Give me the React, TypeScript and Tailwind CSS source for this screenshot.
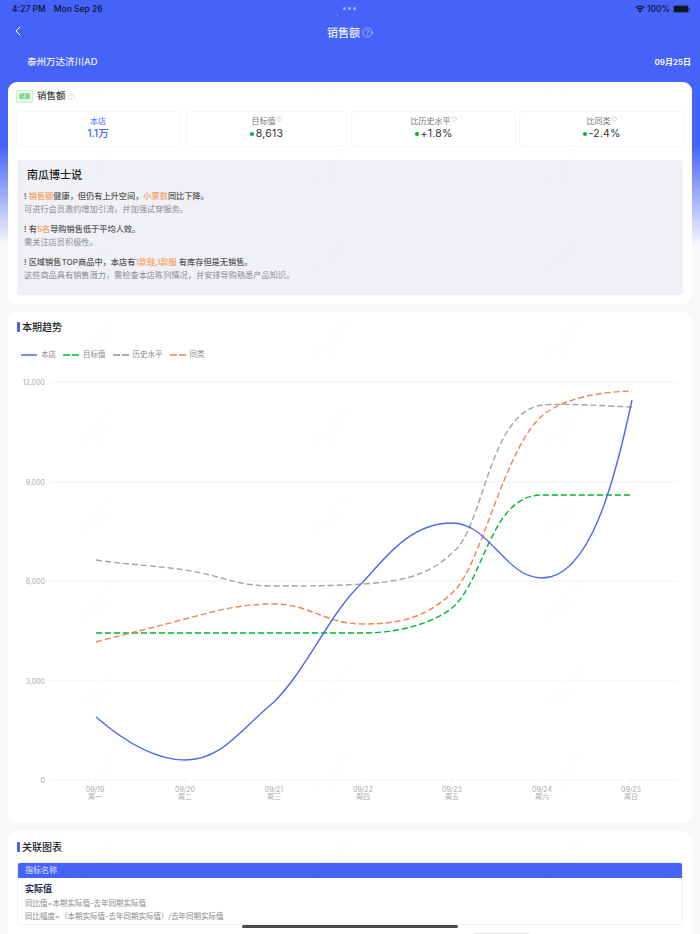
import React from 'react';
import { ChevronLeft, CircleHelp } from 'lucide-react';

const trendLines = [
  {
    color: '#a3a3a3',
    dash: '6 3',
    d: 'M96 560 C130 565 160 566 185 570 C225 576 235 586 274 586 C310 586 330 586 363 584 C400 582 430 575 452 553 C484 530 488 412 542 405 C570 403 600 406 632 407',
  },
  {
    color: '#00b42a',
    dash: '6 3',
    d: 'M96 633 L363 633 C395 633 430 625 452 608 C485 580 490 495 542 495 L632 495',
  },
  {
    color: '#f5814a',
    dash: '6 3',
    d: 'M96 642 C126 634 155 627 185 619 C215 611 240 604 274 604 C310 604 325 624 363 624 C400 624 425 618 452 593 C482 568 505 440 547 412 C570 397 600 392 632 391',
  },
  {
    color: '#4a68f5',
    d: 'M96 717 C125 742 155 760 185 760 C222 760 240 730 274 702 C308 668 330 612 363 582 C385 558 410 523 452 523 C490 523 505 578 542 578 C590 578 615 480 632 400',
  },
];

const grid = [
  { y: 382, label: '12,000' },
  { y: 482, label: '9,000' },
  { y: 581, label: '6,000' },
  { y: 681, label: '3,000' },
  { y: 780, label: '0' },
];

const days = [
  { x: 95, date: '09/19', week: '周一' },
  { x: 185, date: '09/20', week: '周二' },
  { x: 274, date: '09/21', week: '周三' },
  { x: 363, date: '09/22', week: '周四' },
  { x: 452, date: '09/23', week: '周五' },
  { x: 542, date: '09/24', week: '周六' },
  { x: 631, date: '09/25', week: '周日' },
];

const legend = [
  { label: '本店', color: '#4a68f5' },
  { label: '目标值', color: '#00b42a', dash: '7 2' },
  { label: '历史水平', color: '#8f8f8f', dash: '7 2' },
  { label: '同类', color: '#f5814a', dash: '7 2' },
];

const Hl: React.FC<{ children: React.ReactNode }> = ({ children }) => (
  <span className="font-medium text-[#f5a05f]">{children}</span>
);

const SectionTitle: React.FC<{ title: string }> = ({ title }) => (
  <div className="flex items-center gap-[2px] h-[12px]">
    <div className="w-[3px] h-[10px] bg-[#4562f9] rounded-[1px]" />
    <span className="text-[10px] leading-[12px] font-medium text-[#222]">{title}</span>
  </div>
);

const MetricCard: React.FC<{ label: string; value: string; className: string }> = ({ label, value, className }) => (
  <div className={`h-[36px] pb-[2px] rounded-[4px] border border-[#f5f6f8] flex flex-col items-center justify-center ${className}`}>
    <div className="flex items-start text-[8px] leading-[11px] text-[#777]">
      {label}
      <CircleHelp className="w-[6px] h-[6px] text-[#b5b5b5]" strokeWidth={1.5} />
    </div>
    <div className="flex items-center gap-[2px] text-[10.5px] leading-[13px] text-[#333] tracking-[0.2px]">
      <span className="w-[4px] h-[4px] rounded-full bg-[#00b42a]" />
      {value}
    </div>
  </div>
);

export default function App() {
  return (
    <div
      className="relative w-[700px] h-[934px] overflow-hidden bg-[linear-gradient(#4562f9_0,#4562f9_145px,#f6f8f9_245px)]"
      style={{ fontFamily: 'Inter, "Noto Sans CJK SC", sans-serif' }}
    >
      {/* status bar */}
      <div className="relative h-[18px] flex items-center justify-between pl-[12px] pr-[10px] text-[8.5px] font-medium text-[#10132a]">
        <div className="flex gap-[8px]">
          <span>4:27 PM</span>
          <span>Mon Sep 26</span>
        </div>
        <div className="absolute left-[343px] top-[7px] flex gap-[2px]">
          <span className="w-[3px] h-[3px] rounded-full bg-white/50" />
          <span className="w-[3px] h-[3px] rounded-full bg-white/50" />
          <span className="w-[3px] h-[3px] rounded-full bg-white/50" />
        </div>
        <div className="flex items-center gap-[2px]">
          <svg width="10" height="8" viewBox="0 0 20 15" fill="#10132a">
            <path d="M10 3c3.2 0 6 1.2 8.200 3.200l1.500-1.700C17.100 2.100 13.700.6 10 .6S2.900 2.100.3 4.500l1.500 1.700C4 4.200 6.800 3 10 3z" />
            <path d="M10 7.300c2 0 3.700.7 5.100 1.900l1.600-1.700C14.900 5.900 12.600 5 10 5s-4.900.9-6.700 2.500l1.600 1.700C6.300 8 8 7.300 10 7.300z" />
            <path d="M10 9.500c-1.400 0-2.600.5-3.500 1.300L10 14.600l3.500-3.800c-.9-.8-2.100-1.300-3.500-1.300z" />
          </svg>
          <span>100%</span>
          <div className="ml-[1px] flex items-center">
            <div className="w-[16px] h-[8px] rounded-[2px] bg-[#10132a] border border-[#3a4a9a]" />
            <div className="w-[1px] h-[3px] bg-[#2a3680]" />
          </div>
        </div>
      </div>

      {/* nav */}
      <div className="relative h-[28px] flex items-center justify-center text-white">
        <ChevronLeft className="absolute left-[10px] top-[5px] w-[16px] h-[16px]" strokeWidth={1.5} />
        <span className="text-[11px] font-medium text-white/90 leading-[14px] mt-[1px]">销售额</span>
        <CircleHelp className="ml-[2px] mt-[1px] w-[11px] h-[11px] text-white/80" strokeWidth={1.3} />
      </div>

      {/* store row */}
      <div className="h-[36px] flex items-center justify-between pl-[27px] pr-[9px] text-white">
        <span className="text-[9.5px] font-medium text-white/90 -mt-[4px]">泰州万达济川AD</span>
        <span className="text-[8px] font-semibold -mt-[4px]">09月25日</span>
      </div>

      {/* summary card */}
      <div className="mx-[8px] h-[222px] bg-white rounded-[9px] px-[8px] pt-[7px]">
        <div className="flex items-center h-[14px]">
          <span className="w-[17px] h-[13px] rounded-[2px] bg-[#e6f9ea] border border-[#c9efd2] text-[5.5px] leading-[11px] text-center text-[#00b42a]">健康</span>
          <span className="ml-[4px] text-[9.5px] font-medium text-[#444]">销售额</span>
          <CircleHelp className="ml-[2px] w-[7px] h-[7px] text-[#bbb]" strokeWidth={1.3} />
        </div>
        <div className="mt-[8px] flex">
          <div className="w-[164px] h-[36px] pb-[2px] rounded-[4px] border border-[#f5f6f8] flex flex-col items-center justify-center">
            <div className="text-[8px] leading-[11px] text-[#4a68f5]">本店</div>
            <div className="text-[10.5px] leading-[13px] text-[#4a68f5] font-medium">1.1万</div>
          </div>
          <MetricCard className="ml-[6px] w-[161px]" label="目标值" value="8,613" />
          <MetricCard className="ml-[4px] w-[165px]" label="比历史水平" value="+1.8%" />
          <MetricCard className="ml-[3px] w-[165px]" label="比同类" value="-2.4%" />
        </div>

        <div className="mt-[13px] mx-[1px] h-[135px] rounded-[4px] bg-[#f0f1f6] pl-[7px] pt-[8px] text-[8.2px] leading-[12.5px]">
          <div className="pl-[3px] text-[11px] leading-[14px] font-medium text-[#1c1c1c]">南瓜博士说</div>
          <div className="mt-[8px] font-medium text-[#555]">! <Hl>销售额</Hl>健康，但仍有上升空间，<Hl>小票数</Hl>同比下降。</div>
          <div className="text-[#8a8a8a]">可进行会员邀约增加引流，并加强试穿服务。</div>
          <div className="mt-[8px] font-medium text-[#555]">! 有<Hl>5名</Hl>导购销售低于平均人效。</div>
          <div className="text-[#8a8a8a]">需关注店员积极性。</div>
          <div className="mt-[8px] font-medium text-[#555]">! 区域销售TOP商品中，本店有<Hl>1款鞋,1款服</Hl> 有库存但是无销售。</div>
          <div className="text-[#8a8a8a]">这些商品具有销售潜力，需检查本店陈列情况，并安排导购熟悉产品知识。</div>
        </div>
      </div>

      {/* trend card */}
      <div className="mt-[8px] mx-[8px] h-[511px] bg-white rounded-[9px]">
        <div className="pl-[9px] pt-[9px]">
          <SectionTitle title="本期趋势" />
        </div>
        <div className="mt-[16px] pl-[13px] flex items-center gap-[7px] h-[12px]">
          {legend.map((item) => (
            <div key={item.label} className="flex items-center gap-[4px]">
              <svg width="16" height="2" className="block">
                <line x1="0" x2="16" y1="1" y2="1" stroke={item.color} strokeWidth="1.5" strokeDasharray={item.dash} />
              </svg>
              <span className="text-[7.5px] leading-[12px] text-[#8a8a8a]">{item.label}</span>
            </div>
          ))}
        </div>
        <svg className="mt-[11px] block" width="684" height="438" viewBox="8 372 684 438">
          {grid.map((g) => (
            <g key={g.y}>
              <line x1="50" x2="677" y1={g.y} y2={g.y} stroke="#f2f2f2" strokeWidth="1" />
              <text x="45" y={g.y + 2.5} textAnchor="end" fontSize="7" fill="#aaa">{g.label}</text>
            </g>
          ))}
          {days.map((d) => (
            <g key={d.x}>
              <line x1={d.x} x2={d.x} y1="780" y2="783" stroke="#eeeeee" strokeWidth="1" />
              <text x={d.x} y="791.5" textAnchor="middle" fontSize="7" fill="#aaa">{d.date}</text>
              <text x={d.x} y="798.5" textAnchor="middle" fontSize="7" fill="#aaa">{d.week}</text>
            </g>
          ))}
          {trendLines.map((line) => (
            <path
              key={line.color}
              d={line.d}
              fill="none"
              stroke={line.color}
              strokeWidth="1.4"
              strokeDasharray={line.dash}
            />
          ))}
        </svg>
      </div>

      {/* related chart card */}
      <div className="mt-[8px] mx-[8px] h-[120px] bg-white rounded-[9px] px-[9px] pt-[10px]">
        <SectionTitle title="关联图表" />
        <div className="mt-[9px] h-[63px] rounded-[3px] border border-[#eef0f4] overflow-hidden">
          <div className="h-[15px] bg-[#4562f9] pl-[7px] text-[8px] leading-[15px] text-white/80">指标名称</div>
          <div className="pl-[7px] pt-[4px]">
            <div className="text-[9px] leading-[14px] font-semibold text-[#1d2b52]">实际值</div>
            <div className="mt-[1px] text-[7.5px] leading-[13px] text-[#8a8a8a]">同比值=本期实际值-去年同期实际值</div>
            <div className="text-[7.5px] leading-[13px] text-[#8a8a8a]">同比幅度=（本期实际值-去年同期实际值）/去年同期实际值</div>
          </div>
        </div>
      </div>

      {/* home indicator */}
      <div className="absolute left-[242px] top-[925px] w-[216px] h-[3px] rounded-full bg-[#4a4a4a]" />
      <div className="absolute left-[475px] top-[933px] w-[55px] h-[1px] bg-[#e5e5e5]" />

      {/* watermark */}
      <div className="absolute inset-x-0 top-[70px] pl-[72px] grid grid-cols-[233px_233px_233px] auto-rows-[87px] pointer-events-none">
        {Array.from({ length: 30 }).map((_, i) => (
          <div key={i} className="w-[70px] h-[40px] -rotate-45 text-center text-[7px] leading-[9px] text-black/[0.05]">
            amoros-tech01
            <br />
            09/26
          </div>
        ))}
      </div>
    </div>
  );
}
